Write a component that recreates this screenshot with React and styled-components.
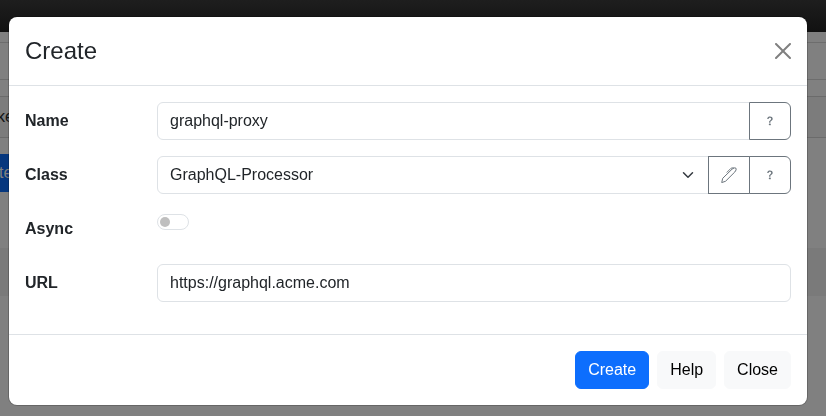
import React from "react";
import styled, { createGlobalStyle } from "styled-components";
import { BsQuestion } from "react-icons/bs";

const GlobalStyle = createGlobalStyle`
  *, *::before, *::after { box-sizing: border-box; }
  body {
    margin: 0;
    overflow: hidden;
    background: #808080;
    color: #212529;
    font: 400 16px/1.5 "Liberation Sans", Arial, sans-serif;
  }
  button, input, select { font: inherit; margin: 0; }
`;

const Page = styled.div`
  height: 416px;
  overflow: hidden;
  background: #808080;
`;

const Navbar = styled.div`
  height: 32px;
  background: linear-gradient(#1e1e1e, #111);
`;

const Breadcrumb = styled.div`
  height: 38px;
  margin-top: 10px;
  border: solid #6d6d6d;
  border-width: 1px 0;
`;

const PanelBar = styled.div`
  display: flex;
  align-items: center;
  height: 42px;
  margin-top: 16px;
  border: solid #6b6b6b;
  border-width: 1px 0;
  background: #7c7c7c;
  color: #111315;
  text-indent: -3px;
`;

const PageButton = styled.div`
  display: flex;
  align-items: center;
  width: 22px;
  height: 38px;
  margin-top: 16px;
  background: #06377e;
  color: #808080;
  text-indent: -1px;
`;

const Stripe = styled.div`
  height: 48px;
  margin-top: 56px;
  background: #7a7a7a;
`;

const Overlay = styled.div`
  position: fixed;
  inset: 0;
  display: flex;
  align-items: flex-start;
  padding: 17px 19px 0 9px;
`;

const Modal = styled.section`
  width: 100%;
  height: 388px;
  display: flex;
  flex-direction: column;
  border-radius: 8px;
  background: #fff;
  box-shadow: 0 0 0 1px rgba(0, 0, 0, 0.2);
`;

const Header = styled.header`
  display: flex;
  align-items: center;
  justify-content: space-between;
  height: 69px;
  padding: 0 16px;
  border-bottom: 1px solid #dee2e6;
`;

const Title = styled.h1`
  margin: 0;
  font-size: 24px;
  font-weight: 400;
  line-height: 36px;
`;

const Dismiss = styled.button`
  display: flex;
  padding: 0;
  border: 0;
  background: none;
  color: #808080;
`;

const Body = styled.div`
  flex: 1;
  display: flex;
  flex-direction: column;
  gap: 16px;
  padding: 16px;
`;

const Row = styled.div`
  display: grid;
  grid-template-columns: 132px 1fr;
  height: 38px;
`;

const Label = styled.label`
  padding-top: 7px;
  font-weight: 700;
`;

const Group = styled.div`
  display: flex;
  min-width: 0;
`;

const Input = styled.input`
  flex: 1;
  min-width: 0;
  height: 38px;
  padding: 6px 12px;
  border: 1px solid #dee2e6;
  border-radius: ${({ $joined }) => ($joined ? "6px 0 0 6px" : "6px")};
  background: #fff;
  color: #212529;
`;

const Select = styled.div`
  flex: 1;
  display: flex;
  align-items: center;
  justify-content: space-between;
  padding: 0 12px;
  border: 1px solid #dee2e6;
  border-radius: 6px 0 0 6px;
`;

const Addon = styled.button`
  display: flex;
  align-items: center;
  justify-content: center;
  width: 42px;
  margin-left: -1px;
  padding: 0;
  border: 1px solid #6c757d;
  border-radius: ${({ $last }) => ($last ? "0 6px 6px 0" : "0")};
  background: #fff;
  color: #6c757d;
`;

const Switch = styled.button`
  display: flex;
  align-items: center;
  width: 32px;
  height: 16px;
  margin-top: 4px;
  padding: 0 2px;
  border: 1px solid #dee2e6;
  border-radius: 8px;
  background: #fff;
`;

const Knob = styled.span`
  width: 10.5px;
  height: 10.5px;
  margin-left: -0.25px;
  border-radius: 50%;
  background: #bfbfbf;
`;

const Footer = styled.footer`
  display: flex;
  justify-content: flex-end;
  gap: 8px;
  height: 71px;
  padding: 16px;
  border-top: 1px solid #dee2e6;
`;

const Button = styled.button`
  height: 38px;
  padding: 6px 12px;
  border: 1px solid ${({ $primary }) => ($primary ? "#0d6efd" : "#f8f9fa")};
  border-radius: 6px;
  background: ${({ $primary }) => ($primary ? "#0d6efd" : "#f8f9fa")};
  color: ${({ $primary }) => ($primary ? "#fff" : "#000")};
`;

function CloseIcon() {
  return (
    <svg width="16" height="16" viewBox="0 0 16 16" fill="currentColor">
      <path d="M.293.293a1 1 0 0 1 1.414 0L8 6.586 14.293.293a1 1 0 1 1 1.414 1.414L9.414 8l6.293 6.293a1 1 0 0 1-1.414 1.414L8 9.414l-6.293 6.293a1 1 0 0 1-1.414-1.414L6.586 8 .293 1.707a1 1 0 0 1 0-1.414z" />
    </svg>
  );
}

function Chevron() {
  return (
    <svg width="16" height="12" viewBox="0 0 16 16">
      <path fill="none" stroke="#343a40" strokeLinecap="round" strokeLinejoin="round" strokeWidth="2" d="m2 5 6 6 6-6" />
    </svg>
  );
}

function PenIcon() {
  return (
    <svg width="16" height="16" viewBox="0 0 16 16" fill="none" stroke="currentColor" strokeLinecap="round" strokeLinejoin="round">
      <path d="M.8 15.2 1.7 11.3 11 2.2Q13.4.1 14.9 1.1 15.9 2.7 13.8 5L4.8 14Z" />
      <path d="M6 5.2 9.8 1.4Q10.8.5 12.6.9" strokeWidth="0.9" />
    </svg>
  );
}

function HelpAddon() {
  return (
    <Addon $last aria-label="Help">
      <BsQuestion size={16} />
    </Addon>
  );
}

export default function App() {
  return (
    <>
      <GlobalStyle />
      <Page>
        <Navbar />
        <Breadcrumb />
        <PanelBar>ke</PanelBar>
        <PageButton>te</PageButton>
        <Stripe />
      </Page>
      <Overlay>
        <Modal role="dialog">
          <Header>
            <Title>Create</Title>
            <Dismiss aria-label="Close"><CloseIcon /></Dismiss>
          </Header>
          <Body>
            <Row>
              <Label>Name</Label>
              <Group>
                <Input $joined defaultValue="graphql-proxy" />
                <HelpAddon />
              </Group>
            </Row>
            <Row>
              <Label>Class</Label>
              <Group>
                <Select>GraphQL-Processor<Chevron /></Select>
                <Addon aria-label="Edit"><PenIcon /></Addon>
                <HelpAddon />
              </Group>
            </Row>
            <Row>
              <Label>Async</Label>
              <Switch role="switch" aria-checked="false"><Knob /></Switch>
            </Row>
            <Row>
              <Label>URL</Label>
              <Group><Input defaultValue="https://graphql.acme.com" /></Group>
            </Row>
          </Body>
          <Footer>
            <Button $primary>Create</Button>
            <Button>Help</Button>
            <Button>Close</Button>
          </Footer>
        </Modal>
      </Overlay>
    </>
  );
}
